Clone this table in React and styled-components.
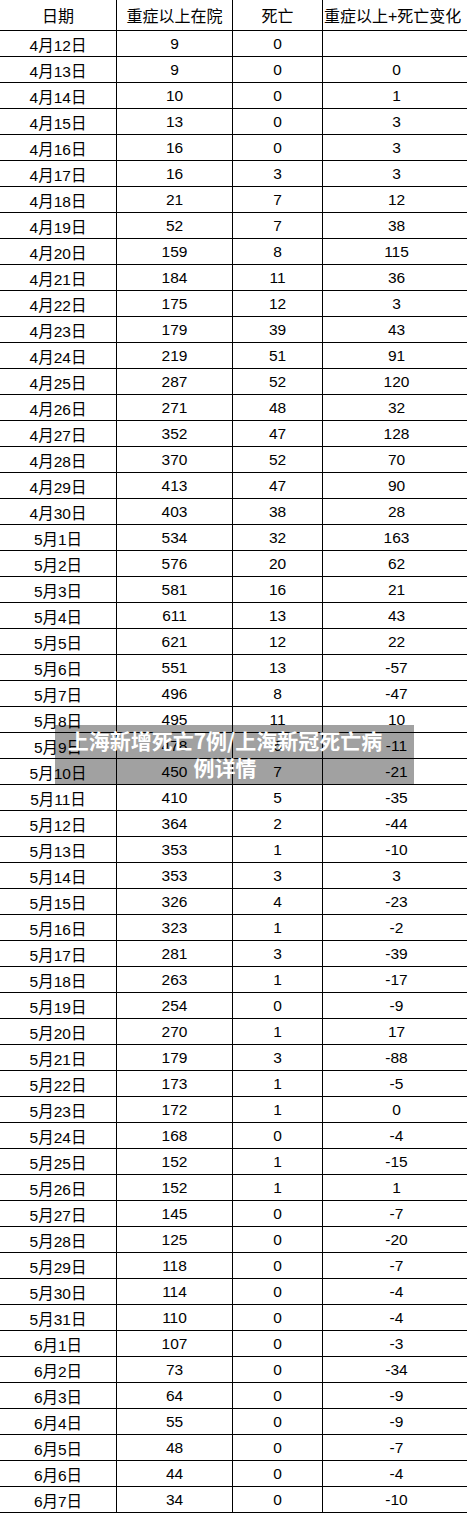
import React from 'react';
import styled, { createGlobalStyle } from 'styled-components';

const GlobalStyle = createGlobalStyle`
  html, body {
    margin: 0;
    padding: 0;
    background: #fff;
  }
  body {
    width: 467px;
    overflow: hidden;
    font-family: "Liberation Sans", Arial, "Noto Sans CJK SC", sans-serif;
    color: #000;
  }
`;

const rows = [
  ['4月12日', 9, 0, ''],
  ['4月13日', 9, 0, 0],
  ['4月14日', 10, 0, 1],
  ['4月15日', 13, 0, 3],
  ['4月16日', 16, 0, 3],
  ['4月17日', 16, 3, 3],
  ['4月18日', 21, 7, 12],
  ['4月19日', 52, 7, 38],
  ['4月20日', 159, 8, 115],
  ['4月21日', 184, 11, 36],
  ['4月22日', 175, 12, 3],
  ['4月23日', 179, 39, 43],
  ['4月24日', 219, 51, 91],
  ['4月25日', 287, 52, 120],
  ['4月26日', 271, 48, 32],
  ['4月27日', 352, 47, 128],
  ['4月28日', 370, 52, 70],
  ['4月29日', 413, 47, 90],
  ['4月30日', 403, 38, 28],
  ['5月1日', 534, 32, 163],
  ['5月2日', 576, 20, 62],
  ['5月3日', 581, 16, 21],
  ['5月4日', 611, 13, 43],
  ['5月5日', 621, 12, 22],
  ['5月6日', 551, 13, -57],
  ['5月7日', 496, 8, -47],
  ['5月8日', 495, 11, 10],
  ['5月9日', 478, 6, -11],
  ['5月10日', 450, 7, -21],
  ['5月11日', 410, 5, -35],
  ['5月12日', 364, 2, -44],
  ['5月13日', 353, 1, -10],
  ['5月14日', 353, 3, 3],
  ['5月15日', 326, 4, -23],
  ['5月16日', 323, 1, -2],
  ['5月17日', 281, 3, -39],
  ['5月18日', 263, 1, -17],
  ['5月19日', 254, 0, -9],
  ['5月20日', 270, 1, 17],
  ['5月21日', 179, 3, -88],
  ['5月22日', 173, 1, -5],
  ['5月23日', 172, 1, 0],
  ['5月24日', 168, 0, -4],
  ['5月25日', 152, 1, -15],
  ['5月26日', 152, 1, 1],
  ['5月27日', 145, 0, -7],
  ['5月28日', 125, 0, -20],
  ['5月29日', 118, 0, -7],
  ['5月30日', 114, 0, -4],
  ['5月31日', 110, 0, -4],
  ['6月1日', 107, 0, -3],
  ['6月2日', 73, 0, -34],
  ['6月3日', 64, 0, -9],
  ['6月4日', 55, 0, -9],
  ['6月5日', 48, 0, -7],
  ['6月6日', 44, 0, -4],
  ['6月7日', 34, 0, -10],
];

const Sheet = styled.div`
  position: relative;
  width: 471px;
`;

const Row = styled.div`
  display: grid;
  grid-template-columns: 117px 116px 90px 148px;
  height: ${(p) => (p.$head ? 31 : 26)}px;
  box-sizing: border-box;
  border-bottom: 1px solid #000;
`;

const Cell = styled.div`
  box-sizing: border-box;
  border-right: 1px solid #000;
  display: flex;
  align-items: center;
  justify-content: ${(p) => (p.$left ? 'flex-start' : 'center')};
  padding-left: ${(p) => (p.$left ? '1px' : '0')};
  font-size: ${(p) => (p.$head ? 16 : 15.5)}px;
  white-space: nowrap;
  overflow: hidden;
`;

const Banner = styled.div`
  position: absolute;
  left: 55px;
  top: 725px;
  width: 359px;
  height: 59px;
  box-sizing: border-box;
  padding: 2px 22px 0 3px;
  background: rgba(0, 0, 0, 0.37);
  color: #fff;
  font-family: "Noto Sans CJK SC", sans-serif;
  font-weight: 700;
  font-size: 21px;
  line-height: 27px;
  text-align: center;
`;

export default function App() {
  return (
    <>
      <GlobalStyle />
      <Sheet>
        <Row $head>
          <Cell $head>日期</Cell>
          <Cell $head>重症以上在院</Cell>
          <Cell $head>死亡</Cell>
          <Cell $head $left>重症以上+死亡变化</Cell>
        </Row>
        {rows.map(([date, severe, death, change]) => (
          <Row key={date}>
            <Cell>{date}</Cell>
            <Cell>{severe}</Cell>
            <Cell>{death}</Cell>
            <Cell>{change}</Cell>
          </Row>
        ))}
        <Banner>上海新增死亡7例/上海新冠死亡病例详情</Banner>
      </Sheet>
    </>
  );
}
